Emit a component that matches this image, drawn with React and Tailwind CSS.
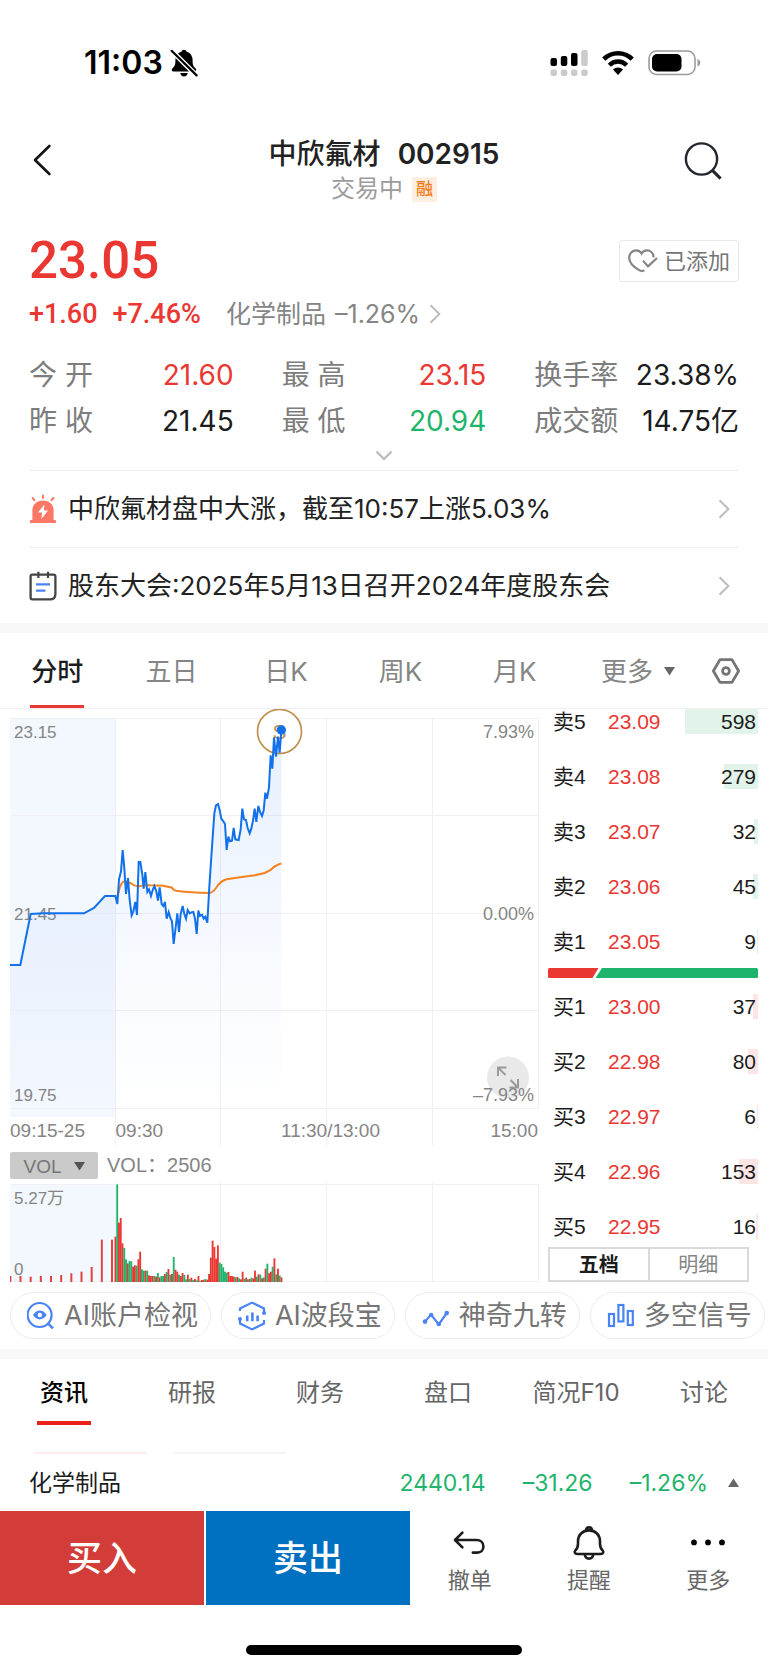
import React from "react";

const G = "#1fb46c";
const R = "#ea3732";

const asks = [
  ["卖5", "23.09", 598],
  ["卖4", "23.08", 279],
  ["卖3", "23.07", 32],
  ["卖2", "23.06", 45],
  ["卖1", "23.05", 9],
];
const bids = [
  ["买1", "23.00", 37],
  ["买2", "22.98", 80],
  ["买3", "22.97", 6],
  ["买4", "22.96", 153],
  ["买5", "22.95", 16],
];

const auctionTops = [948, 948, 950, 948, 948, 945, 940, 935, 921, 839, 839];
const volumeBars = [
  "r830", "g673", "r788", "r774", "r850", "g864", "g898", "r910", "g903", "g904", "r920", "r916", "g917", "r898",
  "r875", "g928", "g932", "r932", "g932", "r946", "r948", "r948", "g948", "r950", "g939", "r952", "g948", "g948",
  "r942", "g936", "r927", "g944", "r942", "g891", "r929", "r935", "g944", "r948", "r939", "g945", "g958", "r944",
  "g957", "r953", "g960", "r957", "g961", "r948", "g962", "r960", "r959", "g957", "r959", "r942", "r893", "r842",
  "r861", "r896", "r856", "g908", "g912", "g922", "g935", "g938", "r936", "r948", "r948", "r950", "g952", "r951",
  "g955", "r958", "r935", "g956", "r953", "g958", "r957", "g953", "r955", "r932", "g950", "r943", "g944", "r955",
  "g952", "r926", "g911", "r940", "r935", "g920", "r895", "g943", "r926", "g947", "r952",
];

const pricePoints =
  "30,795 61,795 92,642 130,640 252,640 282,624 315,588 346,588 352,612 357,538 363,514 368,450 373,505 378,582 384,534 389,600 395,646 400,634 406,606 411,645 416,486 421,486 427,524 431,566 436,516 442,576 447,568 453,588 458,570 463,558 469,574 474,602 479,562 485,612 490,618 495,606 500,656 506,636 511,654 516,664 521,732 526,690 532,640 537,696 542,642 548,618 553,642 558,656 563,630 569,640 574,637 580,636 585,656 590,702 595,632 600,648 606,644 611,656 616,650 622,668 628,560 634,470 643,340 648,316 654,312 659,330 664,356 670,364 675,372 680,450 685,410 690,424 696,422 701,384 706,418 716,420 722,388 727,326 732,358 738,360 743,384 749,400 754,386 759,362 764,326 769,366 775,318 780,336 786,348 791,332 796,278 801,296 807,262 812,166 817,206 822,112 828,170 834,110 839,158 844,90";
const avgPath =
  "M352 590 L357 572 Q361 552 370 545 Q382 543 392 550 Q404 560 418 559 Q430 555 450 556 L490 557 L516 563 Q520 572 532 573 Q570 578 628 579 Q638 578 648 564 Q660 544 680 538 L720 532 L765 526 L794 519 L812 510 Q822 499 832 495 L844 490";

function StatusBar() {
  return (
    <div className="flex h-[46px] items-center justify-between pr-[67px] pl-[84px]">
      <div className="flex items-center gap-[7px]">
        <span className="text-[32px] leading-[40px] font-semibold text-black">11:03</span>
        <svg width="28" height="28" viewBox="0 0 28 28" aria-hidden="true">
          <path d="M14 0.8 C15.6 0.8 16.4 1.8 16.6 2.8 C20.6 3.8 22.6 7.4 22.6 11.4 C22.6 15.6 23.2 17.2 25.4 19.2 C26.8 20.6 26.4 22.4 24.6 22.4 H3.4 C1.6 22.4 1.2 20.6 2.6 19.2 C4.8 17.2 5.4 15.6 5.4 11.4 C5.4 7.4 7.4 3.8 11.4 2.8 C11.6 1.8 12.4 0.8 14 0.8 Z M10.2 24 H17.8 C17.6 26 16 27.4 14 27.4 C12 27.4 10.4 26 10.2 24 Z" fill="#000" />
          <path d="M2 2 L26.6 26.6" stroke="#fff" strokeWidth="5" />
          <path d="M1.6 1.8 L26.6 26.4" stroke="#000" strokeWidth="2.2" strokeLinecap="round" />
        </svg>
      </div>
      <div className="flex items-center gap-[14px]">
        <svg width="38" height="28" viewBox="0 0 38 28" aria-hidden="true">
          <g fill="#000">
            <rect x="0.5" y="9" width="6.5" height="8" rx="2" />
            <rect x="10.8" y="7" width="6.5" height="10" rx="2" />
            <rect x="21" y="4" width="6.5" height="13" rx="2" />
          </g>
          <g fill="#cbcbcb">
            <rect x="31.2" y="1" width="6.5" height="16" rx="2" />
            <rect x="0.5" y="20.5" width="6.5" height="6.5" rx="2" />
            <rect x="10.8" y="20.5" width="6.5" height="6.5" rx="2" />
            <rect x="21" y="20.5" width="6.5" height="6.5" rx="2" />
            <rect x="31.2" y="20.5" width="6.5" height="6.5" rx="2" />
          </g>
        </svg>
        <svg width="32" height="26" viewBox="0 0 32 26" aria-hidden="true">
          <path d="M1.8 9.2 A20 20 0 0 1 30.2 9.2" fill="none" stroke="#000" strokeWidth="4.6" />
          <path d="M7.4 15.2 A12 12 0 0 1 24.6 15.2" fill="none" stroke="#000" strokeWidth="4.4" />
          <path d="M16 25 L11 19.6 A7 7 0 0 1 21 19.6 Z" fill="#000" />
        </svg>
        <svg width="53" height="26" viewBox="0 0 53 26" aria-hidden="true">
          <rect x="1" y="1" width="46" height="23.5" rx="7.5" fill="none" stroke="#9b9b9b" strokeWidth="1.6" />
          <rect x="4" y="4" width="29.5" height="17.5" rx="5" fill="#000" />
          <path d="M49.5 8.8 Q52.4 10.4 52.4 12.8 Q52.4 15.2 49.5 16.8 Z" fill="#9b9b9b" />
        </svg>
      </div>
    </div>
  );
}

function Chevron({ className }) {
  return (
    <svg className={className} width="12" height="20" viewBox="0 0 12 20" fill="none" aria-hidden="true">
      <path d="M1.5 1.2 L10.4 10 L1.5 18.8" stroke="#bdbdbd" strokeWidth="2" />
    </svg>
  );
}

function Header() {
  return (
    <header className="mt-[24px] flex h-[100px] items-start justify-between px-[24px]">
      <button aria-label="返回" className="flex h-[100px] w-[80px] items-center pl-[8px]">
        <svg width="20" height="32" viewBox="0 0 20 32" fill="none">
          <path d="M17.4 2 L3 16 L17.4 30" stroke="#141414" strokeWidth="2.6" strokeLinecap="round" strokeLinejoin="round" />
        </svg>
      </button>
      <div className="flex flex-col items-center pt-[24px]">
        <h1 className="flex gap-[17px] text-[28px] leading-[40px] text-[#222]">
          <span className="font-medium">中欣氟材</span>
          <span className="font-semibold">002915</span>
        </h1>
        <div className="flex h-[30px] items-center gap-[9px]">
          <span className="text-[24px] leading-[30px] text-[#9c9c9c]">交易中</span>
          <span className="flex h-[25px] w-[25px] items-center justify-center rounded-[2px] bg-[#fdeee0] text-[17px] leading-[25px] font-medium text-[#f07d1a]">融</span>
        </div>
      </div>
      <button aria-label="搜索" className="flex h-[100px] w-[80px] items-center justify-end pr-[20px]">
        <svg width="40" height="40" viewBox="0 0 40 40" fill="none" stroke="#23262f" strokeWidth="2.4">
          <circle cx="17.5" cy="19" r="15.6" />
          <path d="M28.4 30.4 L36.6 38.6" strokeWidth="3" />
        </svg>
      </button>
    </header>
  );
}

function Stat({ label, value, tone }) {
  return (
    <div className="flex justify-between whitespace-nowrap">
      <dt className="text-[#7d7d7d]">{label}</dt>
      <dd className={tone}>{value}</dd>
    </div>
  );
}

function Quote() {
  return (
    <section className="px-[29px]">
      <div className="flex h-[62px] items-center justify-between">
        <span className="font-[Roboto,sans-serif] text-[51px] leading-[60px] font-medium text-[#ea3732]">23.05</span>
        <button className="flex h-[42px] items-center gap-[6px] rounded-[3px] border border-[#e8e8e8] px-[8px] text-[22px] leading-[30px] text-[#757575]">
          <svg width="30" height="24" viewBox="0 0 30 24" fill="none" stroke="#858585" strokeWidth="2.2">
            <path d="M25.6 8.4 C25.4 4 22.4 1.4 19 1.4 C16.8 1.4 14.6 2.6 13.6 4.6 C12.6 2.6 10.4 1.4 8.2 1.4 C4.4 1.4 1.2 4.4 1.2 8.8 C1.2 14.6 7.6 19.2 11.6 21.4 C13.6 22.5 14.6 22.4 16.4 21.2" />
            <path d="M15 11.6 L20 17.4 L29 9" />
          </svg>
          已添加
        </button>
      </div>
      <div className="flex h-[44px] items-center">
        <span className="flex gap-[15px] font-[Roboto,sans-serif] text-[27px] leading-[40px] font-medium text-[#ea3732]">
          <span>+1.60</span>
          <span>+7.46%</span>
        </span>
        <a href="#sector" className="ml-[25px] flex items-center gap-[9px] text-[25px] leading-[40px] text-[#858585]">
          <span>化学制品</span>
          <span>–1.26%</span>
          <Chevron />
        </a>
      </div>
      <dl className="mt-[16px] grid grid-cols-3 gap-x-[48px] text-[28px] leading-[46px]">
        <Stat label="今 开" value="21.60" tone="text-[#ea3732]" />
        <Stat label="最 高" value="23.15" tone="text-[#ea3732]" />
        <Stat label="换手率" value="23.38%" tone="text-[#1c1c1c]" />
        <Stat label="昨 收" value="21.45" tone="text-[#1c1c1c]" />
        <Stat label="最 低" value="20.94" tone="text-[#1fb46c]" />
        <Stat label="成交额" value="14.75亿" tone="text-[#1c1c1c]" />
      </dl>
      <button aria-label="展开" className="flex h-[26px] w-full items-center justify-center pb-[4px]">
        <svg width="18" height="11" viewBox="0 0 18 11" fill="none">
          <path d="M1.5 1.5 L9 9 L16.5 1.5" stroke="#bdbdbd" strokeWidth="2.4" />
        </svg>
      </button>
      <a href="#alert" className="flex h-[77px] items-center border-t border-[#eeeeee] text-[26px] leading-[40px] text-[#222]">
        <svg width="28" height="30" viewBox="0 0 28 30" aria-hidden="true">
          <g stroke="#fb7866" strokeWidth="2" strokeLinecap="round">
            <path d="M14 1.4 V4 M3.6 4 L5.4 6.2 M24.4 4 L22.6 6.2" />
          </g>
          <path d="M3.4 26 V16 C3.4 10.2 8 6.4 14 6.4 C20 6.4 24.6 10.2 24.6 16 V26 H26 Q27 26 27 27 V29 H1 V27 Q1 26 2 26 Z" fill="#fb7866" />
          <path d="M15.4 10.4 L9 18.6 H13.2 L12.4 25 L19 16.6 H14.8 Z" fill="#fff" />
        </svg>
        <span className="ml-[11px]">中欣氟材盘中大涨，截至10:57上涨5.03%</span>
        <Chevron className="mr-[9px] ml-auto" />
      </a>
      <a href="#meeting" className="flex h-[76px] items-center border-t border-[#eeeeee] text-[26px] leading-[40px] text-[#222]">
        <svg width="28" height="30" viewBox="0 0 28 30" fill="none" aria-hidden="true">
          <path d="M3.4 3.6 H24.6 Q26.4 3.6 26.4 5.4 V23 Q26.4 28.4 21 28.4 H3.4 Q1.6 28.4 1.6 26.6 V5.4 Q1.6 3.6 3.4 3.6 Z" stroke="#454545" strokeWidth="2.3" strokeLinejoin="round" />
          <path d="M9.4 0.8 V7 M19 0.8 V7" stroke="#454545" strokeWidth="2.2" />
          <path d="M7 13.4 H21 M7 19.6 H16.4" stroke="#4a83f5" strokeWidth="2.3" />
        </svg>
        <span className="ml-[11px]">股东大会:2025年5月13日召开2024年度股东会</span>
        <Chevron className="mr-[9px] ml-auto" />
      </a>
    </section>
  );
}

function ChartTabs() {
  return (
    <nav className="flex h-[76px] border-b border-[#efefef] pt-[2px] text-[26px] leading-[36px] text-[#858585]">
      <div className="flex flex-1">
        <button className="relative flex-1 font-medium text-[#1c1c1c]">
          分时
          <span className="absolute bottom-0 left-1/2 h-[3px] w-[54px] -translate-x-1/2 bg-[#ea3732]" />
        </button>
        <button className="flex-1">五日</button>
        <button className="flex-1">日K</button>
        <button className="flex-1">周K</button>
        <button className="flex-1">月K</button>
      </div>
      <button className="flex w-[140px] items-center justify-center gap-[11px] pr-[8px]">
        更多
        <svg width="11" height="9" viewBox="0 0 11 9">
          <path d="M0 0 H11 L5.5 8.6 Z" fill="#666" />
        </svg>
      </button>
      <button aria-label="设置" className="flex w-[56px] items-center pb-px">
        <svg width="28" height="26" viewBox="0 0 28 26" fill="none" stroke="#757575" strokeWidth="2.8" strokeLinejoin="round">
          <path d="M8 1.6 H20 L26.6 13 L20 24.4 H8 L1.4 13 Z" />
          <circle cx="14" cy="13" r="3.4" />
        </svg>
      </button>
    </nav>
  );
}

function PriceChart() {
  return (
    <svg className="block w-full" viewBox="10 709 530 438" fontFamily="'Liberation Sans', Arial, sans-serif" role="img" aria-label="分时走势">
      <defs>
        <linearGradient id="area" gradientUnits="userSpaceOnUse" x1="0" y1="90" x2="0" y2="1224">
          <stop offset="0" stopColor="#2a7bf6" stopOpacity="0.12" />
          <stop offset="0.5" stopColor="#2a7bf6" stopOpacity="0.05" />
          <stop offset="1" stopColor="#2a7bf6" stopOpacity="0" />
        </linearGradient>
      </defs>
      <rect x="10" y="718" width="105.5" height="399" fill="#f3f7fe" />
      <path
        d="M10 718.5 H538.5 M10 815.5 H538.5 M10 913.5 H538.5 M10 1010.5 H538.5 M10 1108.5 H538.5 M115.5 718 V1146 M220.5 718 V1146 M326.5 718 V1146 M432.5 718 V1146 M538.5 718 V1108"
        stroke="#f0f0f2"
      />
      <g fill="#858585" fontSize="17">
        <text x="14" y="738">23.15</text>
        <text x="14" y="919.5">21.45</text>
        <text x="14" y="1101">19.75</text>
      </g>
      <g fill="#858585" fontSize="18" textAnchor="end">
        <text x="534" y="738">7.93%</text>
        <text x="534" y="919.5">0.00%</text>
      </g>
      <g fill="#858585" fontSize="19">
        <text x="10" y="1137">09:15-25</text>
        <text x="115.5" y="1137">09:30</text>
        <text x="330.5" y="1137" textAnchor="middle">11:30/13:00</text>
        <text x="538" y="1137" textAnchor="end">15:00</text>
      </g>
      <circle cx="279.5" cy="731.5" r="22" fill="#fff" fillOpacity="0.7" stroke="#c0904e" strokeWidth="1.7" />
      <text x="279.5" y="739" textAnchor="middle" fontSize="21" fill="#c0904e">S</text>
      <g transform="translate(0 700) scale(0.33333)">
        <polygon points={pricePoints + " 844,1224 30,1224"} fill="url(#area)" />
        <path d={avgPath} fill="none" stroke="#f5821f" strokeWidth="6" />
        <polyline points={pricePoints} fill="none" stroke="#1271ea" strokeWidth="6" />
        <circle cx="844" cy="90" r="14" fill="#1271ea" />
      </g>
      <circle cx="508" cy="1077.5" r="21" fill="#e9e9e9" />
      <path d="M505.5 1075 L498 1067.5 M498 1076 V1067.5 H506.5 M510.5 1080 L518 1087.5 M518 1079 V1087.5 H509.5" fill="none" stroke="#9a9a9a" strokeWidth="2" />
      <text x="534" y="1101" textAnchor="end" fontSize="18" fill="#858585">–7.93%</text>
    </svg>
  );
}

function VolumeChart() {
  return (
    <svg className="block w-full" viewBox="10 1182 530 100" fontFamily="'Liberation Sans', 'Noto Sans CJK SC', sans-serif" role="img" aria-label="成交量">
      <rect x="10" y="1184" width="105.5" height="98" fill="#f3f7fe" />
      <path
        d="M10 1184.5 H538.5 M10 1281.5 H538.5 M115.5 1182 V1282 M220.5 1182 V1282 M326.5 1182 V1282 M432.5 1182 V1282 M538.5 1184 V1282"
        stroke="#f0f0f2"
      />
      <g fill="#858585" fontSize="17">
        <text x="14" y="1204">5.27万</text>
        <text x="14" y="1275">0</text>
      </g>
      <g transform="translate(0 960) scale(0.33333)">
        {auctionTops.map((top, i) => (
          <rect key={i} x={28 + i * 30.5} y={top} width="6" height={966 - top} fill="#e2433f" />
        ))}
        {volumeBars.map((bar, i) => {
          const top = Number(bar.slice(1));
          return <rect key={i} x={343.5 + i * 5.3} y={top} width="5.6" height={966 - top} fill={bar[0] === "g" ? G : R} />;
        })}
      </g>
    </svg>
  );
}

function BookTable({ rows, label, tint }) {
  return (
    <table aria-label={label} className="w-full border-collapse text-left text-[21px] leading-[25px] text-[#1c1c1c]">
      <tbody>
        {rows.map(([name, price, size], i) => (
          <tr key={name} className="align-top">
            <th scope="row" className={"w-[60px] p-0 pl-[5px] font-normal " + (i < 4 ? "h-[55px]" : "h-[25px]")}>
              <span className="block h-[25px]">{name}</span>
            </th>
            <td className="p-0 text-[#ea3732]">
              <span className="block h-[25px]">{price}</span>
            </td>
            <td className="p-0 text-right">
              <span className="relative block h-[25px] pr-[2px]">
                <span className={"absolute top-0 right-0 h-[25px] " + tint} style={{ width: Math.max(1, Math.round(size * 0.122)) }} />
                <span className="relative">{size}</span>
              </span>
            </td>
          </tr>
        ))}
      </tbody>
    </table>
  );
}

function OrderBook() {
  return (
    <div className="w-[210px] shrink-0 font-['Liberation_Sans','Noto_Sans_CJK_SC',sans-serif]">
      <BookTable rows={asks} label="卖盘" tint="bg-[#e2f3ea]" />
      <svg className="mt-[14px] mb-[16px] block w-full" height="10" viewBox="0 0 210 10" aria-hidden="true">
        <path d="M1.5 0 H50.5 L44.5 10 H1.5 Q0 10 0 8.5 V1.5 Q0 0 1.5 0 Z" fill={R} />
        <path d="M54 0 H208.5 Q210 0 210 1.5 V8.5 Q210 10 208.5 10 H47.5 Z" fill={G} />
      </svg>
      <BookTable rows={bids} label="买盘" tint="bg-[#fde5e5]" />
      <div className="mt-[8px] mr-[9px] flex h-[35px] text-[20px] leading-[31px]">
        <button className="flex-1 border-2 border-[#d9d9d9] pt-px font-bold text-[#1c1c1c]">五档</button>
        <button className="flex-1 border-2 border-l-0 border-[#d9d9d9] pt-px text-[#858585]">明细</button>
      </div>
    </div>
  );
}

function ChartSection() {
  return (
    <section className="flex gap-[8px] px-[10px]">
      <div className="min-w-0 flex-1">
        <PriceChart />
        <div className="flex h-[35px] items-center gap-[9px] pt-[2px] font-['Liberation_Sans','Noto_Sans_CJK_SC',sans-serif] text-[20px] leading-[27px] text-[#858585]">
          <button className="flex h-[27px] w-[88px] items-center justify-center gap-[12px] rounded-[2px] bg-[#cacaca] pt-px text-[19px] text-[#757575]">
            VOL
            <svg width="11" height="9" viewBox="0 0 11 9">
              <path d="M0 0 H11 L5.5 8.6 Z" fill="#555" />
            </svg>
          </button>
          <span>VOL：2506</span>
        </div>
        <VolumeChart />
      </div>
      <OrderBook />
    </section>
  );
}

const blue = "#4a83f5";

function Chip({ icon, label }) {
  return (
    <button className="flex h-[47px] shrink-0 items-center gap-[9px] rounded-full border border-[#ececec] pr-[12px] pl-[16px] text-[27px] leading-[40px] text-[#757575]">
      <svg width="28" height="30" viewBox="0 0 28 30" fill="none" stroke={blue} strokeWidth="2.2" aria-hidden="true">{icon}</svg>
      <span>{label}</span>
    </button>
  );
}

function Chips() {
  return (
    <div className="mt-[10px] flex gap-[10px] overflow-hidden pl-[10px]">
      <Chip
        label="AI账户检视"
        icon={
          <>
            <circle cx="12.6" cy="14" r="12" />
            <path d="M21.2 22.6 L26 27.4" strokeWidth="2.6" />
            <path d="M6 14 Q9 9.6 12.8 9.6 Q16.6 9.6 19.6 14 Q16.6 18.4 12.8 18.4 Q9 18.4 6 14 Z" fill={blue} stroke="none" />
            <circle cx="12.8" cy="14" r="2.2" fill="#fff" stroke="none" />
          </>
        }
      />
      <Chip
        label="AI波段宝"
        icon={
          <>
            <path d="M2 10 V7.4 L14 1.6 L26 7.4 V11 M26 19 V22.6 L14 28.4 L2 22.6 V19" />
            <path d="M9.2 14.6 V20.2 M14.4 11.4 V20.2 M19.6 14.6 V20.2" strokeWidth="2.6" />
            <circle cx="26" cy="12" r="2" fill={blue} stroke="none" />
            <circle cx="2" cy="18" r="2" fill={blue} stroke="none" />
          </>
        }
      />
      <Chip
        label="神奇九转"
        icon={
          <>
            <path d="M3 20.6 L9 13.6 L16.8 23.4 L24.8 12" strokeLinejoin="round" />
            <g fill={blue} stroke="none">
              <circle cx="3" cy="20.6" r="2.3" />
              <circle cx="9.2" cy="14" r="2.2" />
              <circle cx="16.8" cy="23" r="2.3" />
              <circle cx="24.8" cy="12" r="2.3" />
            </g>
          </>
        }
      />
      <Chip
        label="多空信号"
        icon={
          <>
            <rect x="2" y="13" width="5" height="12" />
            <rect x="11.4" y="4" width="5" height="16.4" />
            <rect x="20.8" y="10" width="5" height="14" />
          </>
        }
      />
    </div>
  );
}

function InfoTabs() {
  return (
    <nav className="flex h-[66px] pt-[2px] text-[24px] leading-[34px] text-[#666]">
      <button className="relative flex-1 font-medium text-black">
        资讯
        <span className="absolute bottom-0 left-1/2 h-[4px] w-[54px] -translate-x-1/2 bg-[#e8221a]" />
      </button>
      <button className="flex-1">研报</button>
      <button className="flex-1">财务</button>
      <button className="flex-1">盘口</button>
      <button className="flex-1">简况F10</button>
      <button className="flex-1">讨论</button>
    </nav>
  );
}

function SectorRow() {
  return (
    <div className="flex h-[57px] items-center px-[29px] text-[23px] leading-[32px] text-[#1fb46c]">
      <span className="mr-auto text-[#1c1c1c]">化学制品</span>
      <span>2440.14</span>
      <span className="ml-[37px]">–31.26</span>
      <span className="ml-[37px]">–1.26%</span>
      <svg className="ml-[20px]" width="11" height="9" viewBox="0 0 11 9" aria-hidden="true">
        <path d="M0 9 H11 L5.5 0.4 Z" fill="#666" />
      </svg>
    </div>
  );
}

function BottomAction({ icon, label }) {
  return (
    <button className="flex flex-1 flex-col items-center pt-[14px]">
      <svg width="36" height="36" viewBox="0 0 36 36" fill="none" stroke="#1c1c1c" strokeWidth="2.6" strokeLinecap="round" strokeLinejoin="round" aria-hidden="true">{icon}</svg>
      <span className="mt-[4px] text-[22px] leading-[30px] text-[#666]">{label}</span>
    </button>
  );
}

function BottomBar() {
  return (
    <footer className="flex h-[94px]">
      <div className="flex w-[410px] gap-[2px] text-[35px] leading-[48px] font-medium text-white">
        <button className="flex-1 bg-[#d23d39]">买入</button>
        <button className="flex-1 bg-[#0070c1]">卖出</button>
      </div>
      <div className="flex flex-1">
        <BottomAction label="撤单" icon={<path d="M10.4 7.6 L3 15 L10.4 22.4 M3.4 15 H24.4 C29 15 31.4 17.8 31.4 21.4 C31.4 25 29 27.6 25.4 27.6 H20.8" />} />
        <BottomAction
          label="提醒"
          icon={
            <>
              <path d="M6.4 29 C3.6 29 3 26.8 4.6 25.2 C6.4 23.4 7 21.6 7 18.4 V16.4 C7 10 11.4 5.4 18 5.4 C24.6 5.4 29 10 29 16.4 V18.4 C29 21.6 29.6 23.4 31.4 25.2 C33 26.8 32.4 29 29.6 29 Z" />
              <path d="M15.2 5 Q15.2 2.4 18 2.4 Q20.8 2.4 20.8 5 M13.8 29.6 Q14.4 33.6 18 33.6 Q21.6 33.6 22.2 29.6" />
            </>
          }
        />
        <BottomAction
          label="更多"
          icon={
            <g fill="#000" stroke="none">
              <circle cx="4" cy="17.4" r="2.9" />
              <circle cx="18" cy="17.4" r="2.9" />
              <circle cx="32" cy="17.4" r="2.9" />
            </g>
          }
        />
      </div>
    </footer>
  );
}

export default function App() {
  return (
    <div className="bg-white pt-[40px] pb-[15px] font-[Inter,'Noto_Sans_CJK_SC',sans-serif]">
      <StatusBar />
      <Header />
      <div className="pt-[20px]">
        <Quote />
      </div>
      <div className="h-[10px] bg-[#f8f8f8]" />
      <ChartTabs />
      <ChartSection />
      <Chips />
      <div className="mt-[10px] h-[10px] bg-[#f8f8f8]" />
      <InfoTabs />
      <div className="mt-[27px] flex gap-[28px] pl-[34px]">
        <span className="h-[2px] w-[112px] bg-[#fdecec]" />
        <span className="h-[2px] w-[112px] bg-[#f4f4f4]" />
      </div>
      <SectorRow />
      <BottomBar />
      <div className="mx-auto mt-[40px] h-[10px] w-[36%] rounded-full bg-black" />
    </div>
  );
}
